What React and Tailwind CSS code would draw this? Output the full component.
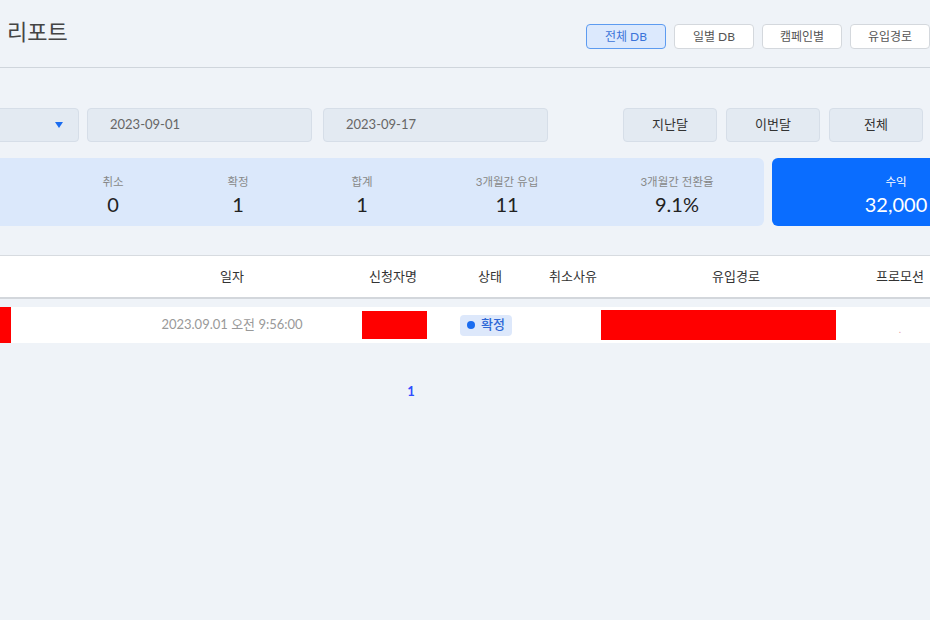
const topTabs = ['전체 DB', '일별 DB', '캠페인별', '유입경로'];
const quickBtns = ['지난달', '이번달', '전체'];
const stats = [
  { label: '대기', value: '0', w: 'w-[125px]' },
  { label: '취소', value: '0', w: 'w-[126px]' },
  { label: '확정', value: '1', w: 'w-[124px]' },
  { label: '합계', value: '1', w: 'w-[124px]' },
  { label: '3개월간 유입', value: '11', w: 'w-[166px]' },
  { label: '3개월간 전환율', value: '9.1%', w: 'w-[174px]' },
];

const App = () => {
  return (
    <div className="w-[930px] h-[620px] overflow-hidden bg-[#eff3f8] font-['Lato','Noto_Sans_CJK_KR',sans-serif] text-[#333]">
      {/* header */}
      <header className="flex h-[68px] border-b border-[#cfd5dc]">
        <h1 className="-ml-[39px] pt-[18px] text-[22px] leading-[28px] font-normal text-[#444] whitespace-nowrap">
          통계 리포트
        </h1>
        <nav className="ml-auto flex gap-2 pt-[24px]">
          {topTabs.map((t, i) => (
            <button
              key={t}
              className={
                i === 0
                  ? 'w-20 h-[25px] rounded-[4px] border border-[#5d9bf0] bg-[#dce9fd] text-[12px] text-[#3b74d9]'
                  : 'w-20 h-[25px] rounded-[4px] border border-[#d4d8dd] bg-white text-[12px] text-[#555]'
              }
            >
              {t}
            </button>
          ))}
        </nav>
      </header>

      {/* filters */}
      <section className="mt-[40px] flex h-[34px]">
        <div className="-ml-[100px] w-[179px] shrink-0 flex items-center justify-end pr-[15px] rounded-[4px] border border-[#d6dee8] bg-[#e3eaf2]">
          <span className="w-0 h-0 border-l-[4px] border-r-[4px] border-t-[6px] border-l-transparent border-r-transparent border-t-[#1a6cf0]"></span>
        </div>
        <div className="ml-2 w-[225px] shrink-0 flex items-center pl-[22px] rounded-[4px] border border-[#d6dee8] bg-[#e3eaf2] text-[13px] text-[#666]">
          2023-09-01
        </div>
        <div className="ml-[11px] w-[225px] shrink-0 flex items-center pl-[22px] rounded-[4px] border border-[#d6dee8] bg-[#e3eaf2] text-[13px] text-[#666]">
          2023-09-17
        </div>
        <div className="ml-[75px] flex gap-[9px] shrink-0">
          {quickBtns.map((b) => (
            <button key={b} className="w-[94px] h-[34px] rounded-[4px] border border-[#d6dee8] bg-[#e3eaf2] text-[13px] text-[#333]">
              {b}
            </button>
          ))}
        </div>
      </section>

      {/* stats */}
      <section className="mt-4 flex h-[68px]">
        <div className="-ml-[75px] w-[839px] shrink-0 flex rounded-[6px] bg-[#dbe8fb] pt-[15px]">
          {stats.map((s) => (
            <div key={s.label} className={`${s.w} shrink-0 flex flex-col items-center`}>
              <span className="text-[11.5px] leading-[17px] text-[#888]">{s.label}</span>
              <span className="mt-[2px] text-[20px] leading-[25px] text-[#222]">{s.value}</span>
            </div>
          ))}
        </div>
        <div className="ml-2 w-[248px] shrink-0 flex flex-col items-center rounded-[6px] bg-[#0a6dff] pt-[15px] text-white">
          <span className="text-[11.5px] leading-[17px]">수익</span>
          <span className="mt-[2px] text-[20px] leading-[25px]">32,000</span>
        </div>
      </section>

      {/* table */}
      <section className="mt-[29px]">
        <div className="-ml-[100px] w-[1060px] h-[44px] flex items-center bg-white border-t border-[#d7dbe0] border-b-2 border-b-[#d3d7dc] text-[13px] text-[#333]">
          <div className="w-[211px] shrink-0"></div>
          <div className="w-[242px] shrink-0 text-center">일자</div>
          <div className="w-[80px] shrink-0 text-center">신청자명</div>
          <div className="w-[114px] shrink-0 text-center">상태</div>
          <div className="w-[52px] shrink-0 text-center whitespace-nowrap">취소사유</div>
          <div className="w-[274px] shrink-0 text-center">유입경로</div>
          <div className="w-[54px] shrink-0 text-center whitespace-nowrap">프로모션</div>
        </div>
        <div className="mt-2 -ml-[100px] w-[1060px] h-[36px] flex bg-white text-[13px]">
          <div className="w-[211px] shrink-0 flex">
            <div className="ml-[100px] w-[11px] bg-[#ff0000]"></div>
          </div>
          <div className="w-[242px] shrink-0 flex items-center justify-center text-[#999]">2023.09.01 오전 9:56:00</div>
          <div className="w-[80px] shrink-0 flex items-center pl-[9px]">
            <div className="w-[65px] h-[28px] bg-[#ff0000]"></div>
          </div>
          <div className="w-[114px] shrink-0 flex items-center pl-[27px]">
            <span className="h-[21px] px-[7px] flex items-center gap-[6px] rounded-[4px] bg-[#dde8fb] text-[13px] font-medium text-[#2d67d6]">
              <span className="w-[8px] h-[8px] rounded-full bg-[#1a6cf0]"></span>
              확정
            </span>
          </div>
          <div className="w-[52px] shrink-0"></div>
          <div className="w-[274px] shrink-0 flex items-center pl-[2px]">
            <div className="w-[235px] h-[30px] bg-[#ff0000]"></div>
          </div>
          <div className="w-[54px] shrink-0 flex items-end justify-center pb-[9px] text-[10px] leading-none text-[#e8a0a8]">.</div>
        </div>
      </section>

      {/* pagination */}
      <div className="mt-[40px] -ml-[100px] w-[1022px] flex justify-center">
        <span className="text-[13px] leading-[16px] font-bold text-[#2f4dff]">1</span>
      </div>
    </div>
  );
};

export default App;
